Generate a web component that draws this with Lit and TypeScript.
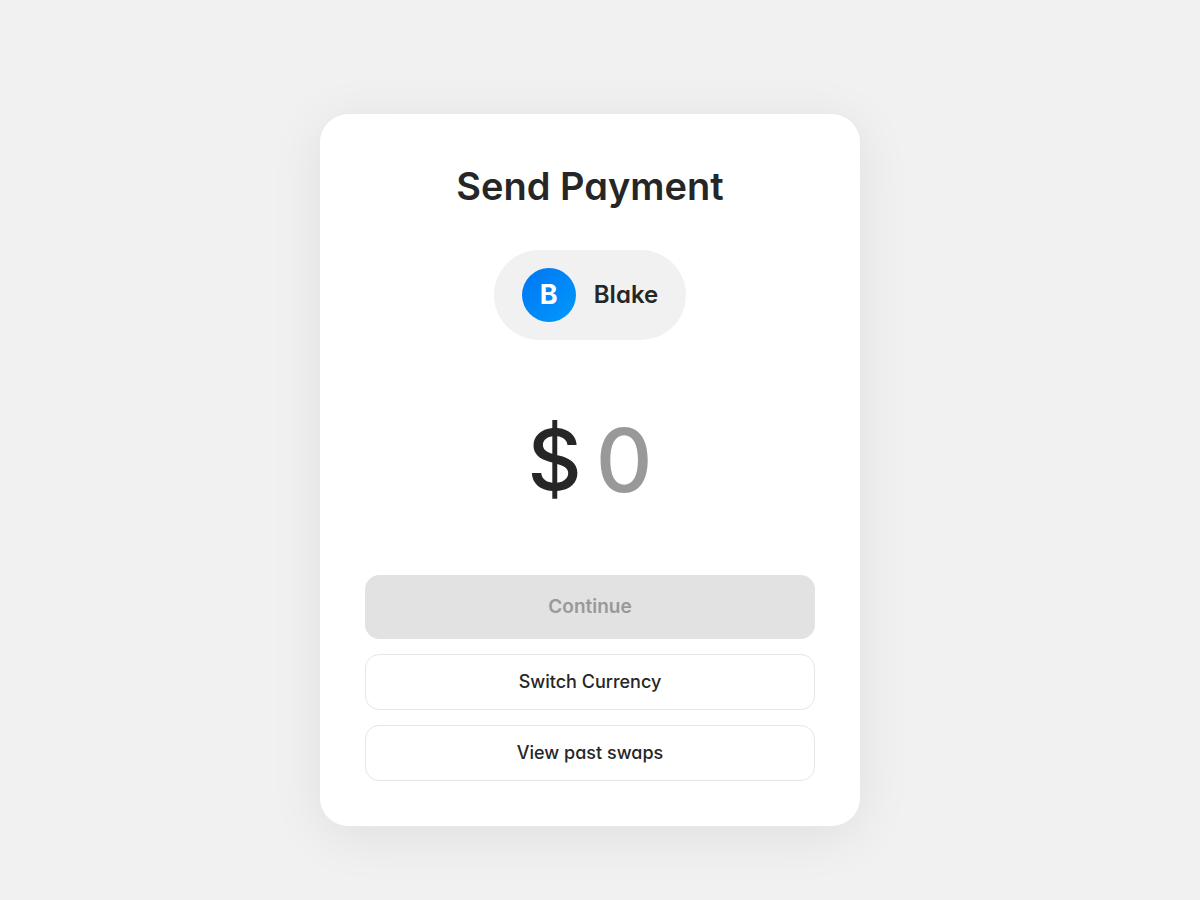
import { LitElement, html, css } from "lit";
import { customElement, state } from "lit/decorators.js";

@customElement("app-root")
export class AppRoot extends LitElement {
  @state() private amount = "";

  static styles = css`
    :host {
      display: flex;
      align-items: center;
      justify-content: center;
      box-sizing: border-box;
      min-height: 100vh;
      padding: 60px 40px 20px 20px;
      background: #f1f1f1;
      color: #262626;
      font-family: Inter, "Open Sans", sans-serif;
      font-feature-settings: "cv11";
    }
    .card {
      box-sizing: border-box;
      display: flex;
      flex-direction: column;
      align-items: center;
      width: 100%;
      max-width: 540px;
      padding: 45px;
      border-radius: 28px;
      background: #fff;
      box-shadow: 0 0 0 1px #e9e9e9, 0 9px 54px rgba(0, 0, 0, 0.08);
    }
    .title {
      margin: 0 0 37px;
      font-size: 38px;
      line-height: 54px;
      font-weight: 600;
    }
    .recipient {
      display: flex;
      align-items: center;
      gap: 18px;
      padding: 18px 28px;
      border-radius: 45px;
      background: #f1f1f1;
      font-size: 24px;
      line-height: 28px;
      font-weight: 600;
    }
    .avatar {
      display: grid;
      place-items: center;
      width: 54px;
      height: 54px;
      border-radius: 50%;
      background: linear-gradient(135deg, #0076f3, #0099fb);
      color: #fff;
      font-size: 27px;
      font-weight: 700;
    }
    .amount {
      display: flex;
      align-items: center;
      justify-content: center;
      gap: 14px;
      padding: 62px 0 57px;
      font-size: 88px;
      line-height: 116px;
      font-weight: 500;
    }
    .symbol {
      font-size: 84px;
    }
    .field {
      field-sizing: content;
      min-width: 56px;
      max-width: 320px;
      height: 116px;
      margin: 0;
      padding: 0;
      border: 0;
      outline: 0;
      background: none;
      color: inherit;
      font: inherit;
    }
    .field::placeholder {
      color: #999;
      opacity: 1;
    }
    .actions {
      display: flex;
      flex-direction: column;
      gap: 15px;
      width: 100%;
    }
    .button {
      padding: 16px;
      border: 1px solid #e6e6e6;
      border-radius: 14px;
      background: #fff;
      color: inherit;
      font-family: inherit;
      font-feature-settings: inherit;
      font-size: 18px;
      line-height: 22px;
      font-weight: 500;
      cursor: pointer;
    }
    .primary {
      padding: 20px;
      border-color: #e2e2e2;
      background: #262626;
      color: #fff;
      font-size: 19px;
      font-weight: 600;
    }
    .primary:disabled {
      background: #e2e2e2;
      color: #999;
      cursor: default;
    }
  `;

  private onInput(event: Event) {
    this.amount = (event.target as HTMLInputElement).value;
  }

  render() {
    return html`
      <main class="card">
        <h1 class="title">Send Payment</h1>
        <div class="recipient">
          <span class="avatar" aria-hidden="true">B</span>
          <span>Blake</span>
        </div>
        <div class="amount">
          <label class="symbol" for="amount">$</label>
          <input
            id="amount"
            class="field"
            inputmode="decimal"
            placeholder="0"
            .value=${this.amount}
            @input=${this.onInput}
          />
        </div>
        <div class="actions">
          <button class="button primary" ?disabled=${!(Number(this.amount) > 0)}>Continue</button>
          <button class="button">Switch Currency</button>
          <button class="button">View past swaps</button>
        </div>
      </main>
    `;
  }
}
